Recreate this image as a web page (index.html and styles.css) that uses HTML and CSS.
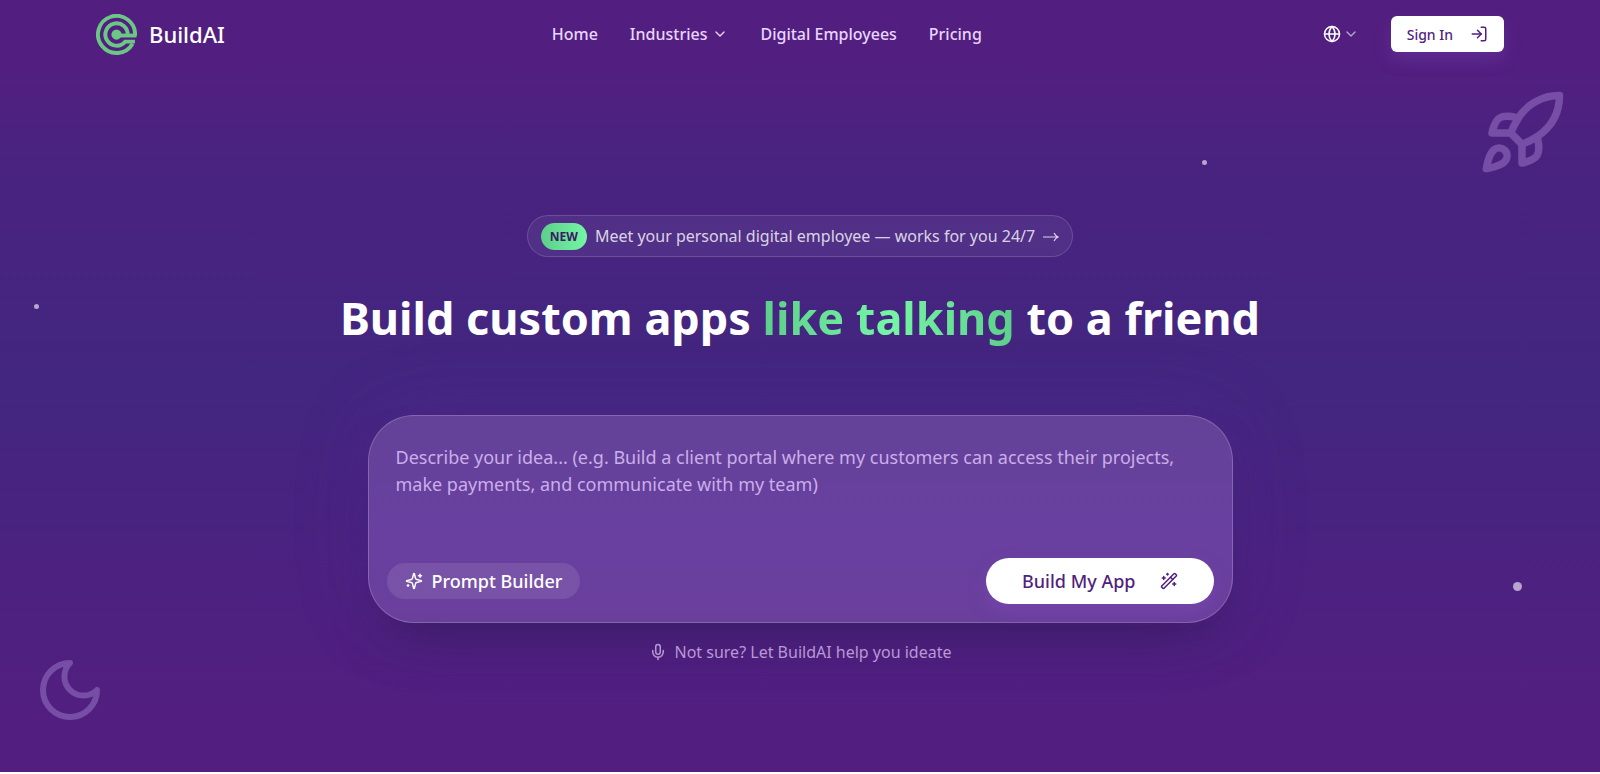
FILE: index.html
```html
<!DOCTYPE html>
<html lang="en">
<head>
    <meta charset="UTF-8">
    <meta name="viewport" content="width=device-width, initial-scale=1.0">
    <title>BuildAI</title>
    <link rel="stylesheet" href="styles.css">
</head>
<body>
    <div class="page">
        <header class="header">
            <a href="#" class="logo">
                <svg class="logo-mark" viewBox="0 0 40 40" fill="none" stroke="currentColor" stroke-width="3.8">
                    <path d="M38.1 21A18.1 18.1 0 1 0 35.7 29"/>
                    <path d="M30.9 21A10.9 10.9 0 1 0 28.4 27H38"/>
                    <path d="M20 21H39.5"/>
                    <circle cx="20" cy="20" r="5" fill="currentColor" stroke="none"/>
                </svg>
                <span>BuildAI</span>
            </a>

            <nav class="nav">
                <a href="#">Home</a>
                <a href="#">Industries
                    <svg class="icon" viewBox="0 0 24 24"><path d="m6 9 6 6 6-6"/></svg>
                </a>
                <a href="#">Digital Employees</a>
                <a href="#">Pricing</a>
            </nav>

            <div class="header-actions">
                <button class="lang-btn" aria-label="Language">
                    <svg class="icon" viewBox="0 0 24 24"><circle cx="12" cy="12" r="10"/><path d="M12 2a14.5 14.5 0 0 0 0 20 14.5 14.5 0 0 0 0-20"/><path d="M2 12h20"/></svg>
                    <svg class="icon lang-arrow" viewBox="0 0 24 24"><path d="m6 9 6 6 6-6"/></svg>
                </button>
                <button class="signin-btn">Sign In
                    <svg class="icon" viewBox="0 0 24 24"><path d="M15 3h4a2 2 0 0 1 2 2v14a2 2 0 0 1-2 2h-4"/><path d="m10 17 5-5-5-5"/><path d="M15 12H3"/></svg>
                </button>
            </div>
        </header>

        <main class="hero">
            <a href="#" class="announcement">
                <span class="badge">NEW</span>
                <span>Meet your personal digital employee — works for you 24/7</span>
                <svg class="arrow" viewBox="0 0 16 16"><path d="M0 9h15M11 5c1 2 2 3 4 4-2 1-3 2-4 4"/></svg>
            </a>

            <h1>Build custom apps <span class="highlight">like talking</span> to a friend</h1>

            <form class="prompt-card">
                <textarea class="prompt-input" aria-label="Describe your idea" placeholder="Describe your idea... (e.g. Build a client portal where my customers can access their projects, make payments, and communicate with my team)"></textarea>
                <div class="prompt-actions">
                    <button type="button" class="builder-btn">
                        <svg class="icon" viewBox="0 0 24 24"><path d="M9.94 15.5A2 2 0 0 0 8.5 14.06l-6.14-1.58a.5.5 0 0 1 0-.96L8.5 9.94A2 2 0 0 0 9.94 8.5l1.58-6.14a.5.5 0 0 1 .96 0l1.58 6.14a2 2 0 0 0 1.44 1.44l6.14 1.58a.5.5 0 0 1 0 .96l-6.14 1.58a2 2 0 0 0-1.44 1.44l-1.58 6.14a.5.5 0 0 1-.96 0z"/><path d="M20 3v4M22 5h-4M4 17v2M5 18H3"/></svg>
                        Prompt Builder
                    </button>
                    <button type="submit" class="build-btn">Build My App
                        <svg class="icon" viewBox="0 0 24 24"><path d="m21.64 3.64-1.28-1.28a1.21 1.21 0 0 0-1.72 0L2.36 18.64a1.21 1.21 0 0 0 0 1.72l1.28 1.28a1.2 1.2 0 0 0 1.72 0L21.64 5.36a1.2 1.2 0 0 0 0-1.72"/><path d="m14 7 3 3M5 6v4M19 14v4M10 2v2M7 8H3M21 16h-4M11 3H9"/></svg>
                    </button>
                </div>
            </form>

            <a href="#" class="ideate">
                <svg class="icon" viewBox="0 0 24 24"><path d="M12 2a3 3 0 0 0-3 3v7a3 3 0 0 0 6 0V5a3 3 0 0 0-3-3Z"/><path d="M19 10v2a7 7 0 0 1-14 0v-2"/><path d="M12 19v3"/></svg>
                Not sure? Let BuildAI help you ideate
            </a>
        </main>

        <!-- floating decorations -->
        <svg class="icon deco rocket" viewBox="0 0 24 24"><path d="M4.5 16.5c-1.5 1.26-2 5-2 5s3.74-.5 5-2c.71-.84.7-2.13-.09-2.91a2.18 2.18 0 0 0-2.91-.09z"/><path d="m12 15-3-3a22 22 0 0 1 2-3.95A12.88 12.88 0 0 1 22 2c0 2.72-.78 7.5-6 11a22.35 22.35 0 0 1-4 2z"/><path d="M9 12H4s.55-3.03 2-4c1.62-1.08 5 0 5 0"/><path d="M12 15v5s3.03-.55 4-2c1.08-1.62 0-5 0-5"/></svg>
        <svg class="icon deco moon" viewBox="0 0 24 24"><path d="M12 3a6 6 0 0 0 9 9 9 9 0 1 1-9-9Z"/></svg>
        <span class="dot dot-top"></span>
        <span class="dot dot-left"></span>
        <span class="dot dot-right"></span>
    </div>
</body>
</html>
```
FILE: styles.css
```css
* {
    box-sizing: border-box;
}
body {
    margin: 0;
    font-family: "Noto Sans", sans-serif;
    background-color: white;
}
a {
    color: inherit;
    text-decoration: none;
}
button {
    font-family: inherit;
    border: none;
    cursor: pointer;
}
.icon {
    width: 16px;
    height: 16px;
    flex-shrink: 0;
    fill: none;
    stroke: currentColor;
    stroke-width: 2;
    stroke-linecap: round;
    stroke-linejoin: round;
}
.page {
    position: relative;
    min-height: calc(100vh - 2px);
    overflow: hidden;
    background: linear-gradient(to bottom, #521f80 68px, #4a2280 140px, #42267f 50%, #4c2180 75%, #521f80 92%);
}

/* header */
.header {
    display: flex;
    justify-content: space-between;
    align-items: center;
    height: 68px;
    padding: 0 96px;
}
.logo {
    display: flex;
    align-items: center;
    gap: 12px;
    color: white;
    font-size: 22px;
    font-weight: 500;
}
.logo-mark {
    width: 41px;
    height: 41px;
    color: #6cc785;
}
.nav {
    display: flex;
    gap: 32px;
    color: #e9d5ff;
    font-size: 16px;
    font-weight: 500;
}
.nav a {
    display: flex;
    align-items: center;
    gap: 5px;
}
.header-actions {
    display: flex;
    align-items: center;
    gap: 32px;
}
.lang-btn {
    display: flex;
    align-items: center;
    gap: 2px;
    padding: 0 0 0 14px;
    background: none;
    color: white;
}
.lang-btn .icon {
    width: 18px;
    height: 18px;
}
.lang-btn .lang-arrow {
    width: 16px;
    opacity: 0.6;
}
.signin-btn {
    display: flex;
    align-items: center;
    gap: 17px;
    height: 36px;
    padding: 0 16px;
    border-radius: 6px;
    background-color: white;
    color: #521f80;
    font-size: 14px;
    font-weight: 500;
    box-shadow: 0 8px 16px rgba(126, 73, 184, 0.3);
}
.signin-btn .icon {
    width: 18px;
    height: 18px;
}

/* hero */
.hero {
    display: flex;
    flex-direction: column;
    align-items: center;
    padding: 147px 24px 96px;
}
.announcement {
    display: flex;
    align-items: center;
    gap: 8px;
    height: 42px;
    padding: 0 13px;
    border: 1px solid rgba(255, 255, 255, 0.15);
    border-radius: 21px;
    background-color: rgba(255, 255, 255, 0.06);
    color: rgba(255, 255, 255, 0.8);
    font-size: 16px;
}
.badge {
    padding: 0 9px;
    border-radius: 14px;
    background: linear-gradient(to right, #5dcf8b, #75f5a5);
    color: #3b1a66;
    font-size: 12px;
    font-weight: 700;
    line-height: 27px;
}
.arrow {
    width: 16px;
    height: 16px;
    fill: none;
    stroke: currentColor;
    stroke-width: 1.2;
}
h1 {
    margin: 27px 0 64px;
    color: white;
    font-size: 45px;
    font-weight: 700;
    line-height: 67px;
    text-align: center;
}
.highlight {
    background: linear-gradient(to right, #5dcf8b, #75f5a5 50%, #5dcf8b);
    background-clip: text;
    -webkit-background-clip: text;
    color: transparent;
}
.prompt-card {
    display: flex;
    flex-direction: column;
    width: 100%;
    max-width: 865px;
    padding: 18px;
    border: 1px solid rgba(255, 255, 255, 0.2);
    border-radius: 46px;
    background: linear-gradient(to bottom, #634298, #6940a0 60%, #6a3f9c);
    box-shadow: 0 28px 50px -20px rgba(30, 20, 60, 0.5), 0 0 70px rgba(100, 50, 170, 0.3);
}
.prompt-input {
    width: 100%;
    height: 124px;
    padding: 10px 9px 8px;
    border: none;
    outline: none;
    resize: none;
    background: none;
    color: white;
    font-family: inherit;
    font-size: 18px;
    line-height: 27px;
}
.prompt-input::placeholder {
    color: #cbaeea;
    opacity: 1;
}
.prompt-actions {
    display: flex;
    justify-content: space-between;
    align-items: center;
}
.prompt-actions .icon {
    width: 18px;
    height: 18px;
}
.builder-btn {
    display: flex;
    align-items: center;
    gap: 9px;
    height: 36px;
    padding: 0 18px;
    border-radius: 18px;
    background-color: rgba(255, 255, 255, 0.1);
    color: white;
    font-size: 18px;
    font-weight: 500;
}
.build-btn {
    display: flex;
    align-items: center;
    gap: 24px;
    height: 46px;
    padding: 0 36px;
    border-radius: 23px;
    background-color: white;
    color: #521f80;
    font-size: 18px;
    font-weight: 500;
    box-shadow: 0 8px 16px rgba(126, 73, 184, 0.5);
}
.ideate {
    display: flex;
    align-items: center;
    gap: 8px;
    margin-top: 17px;
    color: #b898d6;
    font-size: 16px;
    line-height: 24px;
}
.ideate .icon {
    width: 18px;
    height: 18px;
}

/* decorations */
.deco {
    position: absolute;
    color: #774ea5;
}
.rocket {
    top: 88px;
    right: 33px;
    width: 90px;
    height: 90px;
}
.moon {
    bottom: 46px;
    left: 34px;
    width: 72px;
    height: 72px;
}
.dot {
    position: absolute;
    width: 5px;
    height: 5px;
    border-radius: 50%;
    background-color: #b9a3d0;
}
.dot-top {
    top: 160px;
    right: 393px;
}
.dot-left {
    top: 304px;
    left: 34px;
}
.dot-right {
    top: 582px;
    right: 78px;
    width: 9px;
    height: 9px;
}
```
